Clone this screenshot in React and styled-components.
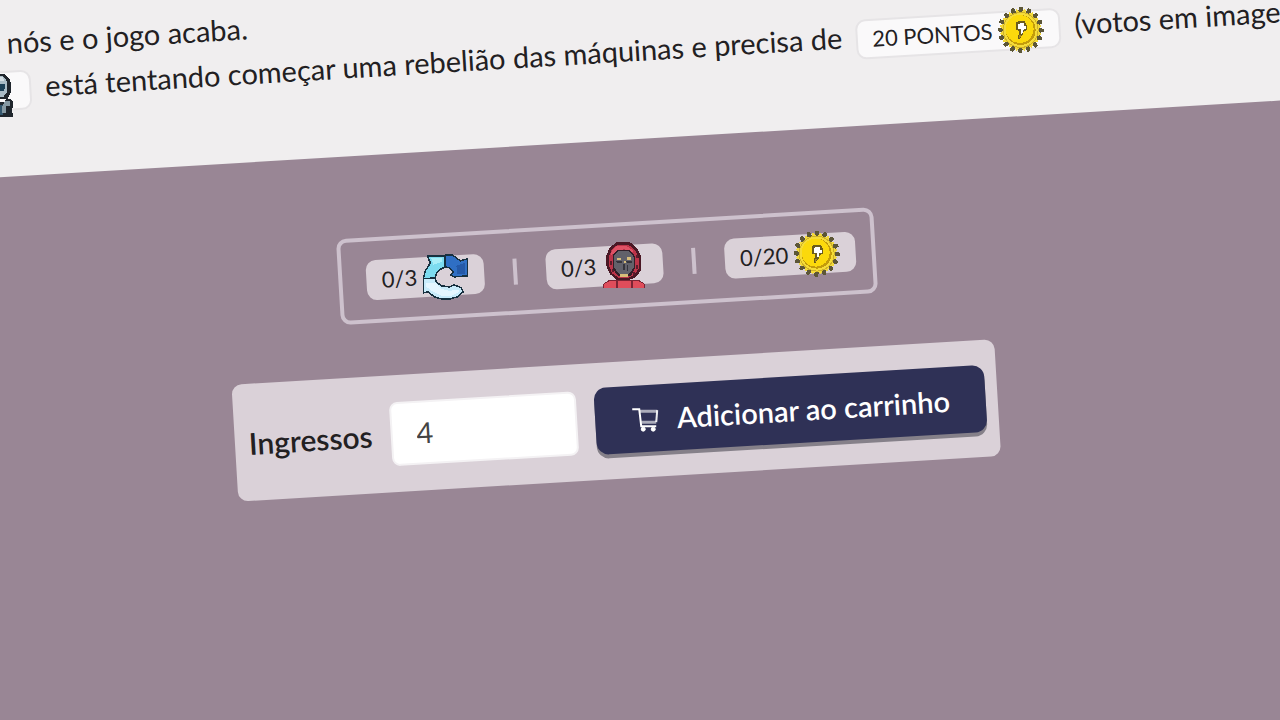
import React from "react";
import styled, { createGlobalStyle } from "styled-components";

const GlobalStyle = createGlobalStyle`
  *, *::before, *::after { box-sizing: border-box; }
  body { margin: 0; background: #998695; }
`;

const Page = styled.main`
  min-height: 100vh;
  overflow: hidden;
  background: #998695;
  color: #222022;
  font-family: Lato, "Open Sans", sans-serif;
  font-size: 29px;
`;

const Tilt = styled.div`
  transform: rotate(-3.43deg);
  transform-origin: 0 0;
`;

const Rules = styled.section`
  margin: 0 -58px;
  padding: 20px 0 66px;
  background: #f0eeef;
`;

const RuleLine = styled.p`
  display: flex;
  align-items: baseline;
  gap: 14px;
  margin: 0;
  padding-left: ${(p) => (p.$indent ? "62px" : "0")};
  line-height: 45px;
  white-space: nowrap;
`;

const Content = styled.section`
  display: flex;
  flex-direction: column;
  align-items: center;
  gap: 53px;
  padding: 82px 100px 0 0;
`;

const Pill = styled.span`
  display: inline-flex;
  flex: none;
  align-items: center;
  height: 40px;
  padding: 0 ${(p) => (p.$light ? "14px" : "15px")};
  border: ${(p) => (p.$light ? "2px solid #e6e4e6" : "none")};
  border-radius: 10px;
  background: ${(p) => (p.$light ? "#faf9fa" : "#dad1d8")};
  font-size: 22px;
  line-height: 36px;

  &::before {
    content: "\\200b";
  }
`;

const Score = styled.div`
  display: flex;
  align-items: center;
  gap: 29px;
  padding: 19px 16px 19px 24px;
  border: 4px solid #cdc1cd;
  border-radius: 10px;
`;

const Divider = styled.span`
  width: 4px;
  height: 26px;
  background: #cdc1cd;
`;

const OrderForm = styled.form`
  display: flex;
  align-items: center;
  gap: 18px;
  padding: 25px 12px 25px 14px;
  border-radius: 10px;
  background: #dad1d8;
`;

const Label = styled.label`
  font-size: 30px;
  font-weight: 600;
`;

const Quantity = styled.input`
  width: 187px;
  height: 64px;
  padding: 0 24px;
  border: 2px solid #f4f2f4;
  border-radius: 8px;
  background: #fff;
  color: #444;
  font: inherit;
`;

const AddButton = styled.button`
  display: flex;
  align-items: center;
  gap: 18px;
  height: 67px;
  padding: 0 36px;
  border: 0;
  border-radius: 12px;
  background: #2f3156;
  box-shadow: 0 4px 0 #858089;
  color: #fff;
  font: inherit;
  font-weight: 600;
  white-space: nowrap;
`;

const Art = styled.svg`
  flex: none;
  width: 48px;
  height: 48px;
  margin-left: 4px;
  overflow: visible;
`;

const CartArt = styled.svg`
  flex: none;
  width: 28px;
  height: 28px;
`;

function Sprite({ children }) {
  return (
    <Art viewBox="0 0 48 48" shapeRendering="crispEdges" aria-hidden="true">
      <g transform="rotate(3.43 24 24)">{children}</g>
    </Art>
  );
}

function CycleIcon() {
  return (
    <Sprite>
      <g stroke="#17303f" strokeWidth="1.5" strokeLinejoin="round">
        <path fill="#c9ecfb" d="M2 27V41L7 40L13 45L20 47H29L36 45L42 40L40 36L33 33L28 35L20 34L15 30L14 26Z" />
        <path fill="#7ddcf0" d="M6 4H23L24 15L18 18L15 22L14 26L2 27L4 19L9 11Z" />
        <path fill="#2f6fc4" d="M24 3H31L39 9L46 7V24L33 25L29 23L32 20L28 16L24 15Z" />
      </g>
      <path fill="#e4f6ff" d="M5 31L14 31L20 37L28 39L37 38L38 40L30 44H20L12 40L5 35Z" />
      <path fill="#a9eef8" d="M10 6H21V10L12 13Z" />
      <path fill="#2459a8" d="M35 14L44 11V22L36 22Z" />
    </Sprite>
  );
}

const teeth = Array.from({ length: 16 }, (_, i) => i * 22.5);

function CoinIcon() {
  return (
    <Sprite>
      {teeth.map((a) => (
        <g key={a} transform={`rotate(${a} 24 24)`}>
          <path fill="#5c5637" d="M21 7L23 1H26L27 7Z" />
          <path fill="#f3d93a" d="M17 9L20 3L25 8Z" />
        </g>
      ))}
      <circle cx="24" cy="24" r="18" fill="#cdb02a" />
      <circle cx="24" cy="24" r="17" fill="#f5dc38" />
      <circle cx="24" cy="24" r="15" fill="#c39c0b" />
      <circle cx="23" cy="23" r="14" fill="#fbd90c" />
      <path fill="#6b5c1e" d="M19 17L22 15H28L30 19V24L27 26L26 29L23 33H21L22 28L23 25L19 24Z" />
      <path fill="#fff" d="M21 19L24 17H27V20H29V23L26 24V27L24 28V23H21Z" />
      <path fill="#a98a1a" d="M23 29H25L23 32H22Z" />
    </Sprite>
  );
}

function HoodIcon() {
  return (
    <Sprite>
      <path fill="#7b2434" d="M3 43L9 39H39L45 43V47H3Z" />
      <path fill="#df4d5b" d="M4 43L10 40H38L44 43V47H4Z" />
      <path fill="#4a1825" d="M17 1H30L37 7L41 15V29L36 36L29 39H17L10 33L6 24V15L10 6Z" />
      <path fill="#bb3449" d="M17 4H29L36 10L39 18V27L34 34L28 37H19L12 32L9 24V15L12 8Z" />
      <path fill="#df5265" d="M16 5H27L34 10L31 12L24 8L16 11L11 14L12 9Z" />
      <path fill="#5a1c2b" d="M10 20H12V24H10ZM12 28H14V31H12ZM36 14H38V17H36ZM36 24H38V28H36ZM33 31H35V34H33Z" />
      <path fill="#321f29" d="M17 9H30L35 15V27L31 35H18L13 28V14Z" />
      <path fill="#62616a" d="M18 10H29L34 16V26L29 33H19L14 26V15Z" />
      <path fill="#35343c" d="M16 20H22V22H17ZM26 20H32V22H27ZM23 23H25V29H23ZM27 24H28V30H27Z" />
      <path fill="#d8bd7a" d="M17 17H21V19H17ZM27 16H31V19H27ZM24 20H26V22H24ZM20 33H28V36H20Z" />
      <path fill="#7b2434" d="M16 39H18V47H16ZM31 39H33V47H31Z" />
    </Sprite>
  );
}

function RobotIcon() {
  return (
    <Sprite>
      <g transform="translate(-3 4)">
        <path fill="#20262d" d="M10 2H40L45 7L47 13V20L43 27H7L3 20V9Z" />
        <path fill="#a9bbc6" d="M11 4H38L42 9L43 20L39 25H11L7 20V10Z" />
        <path fill="#d3dee3" d="M32 5H38L40 9H33Z" />
        <path fill="#1c4057" d="M34 12H40L41 15L39 19H34ZM11 12H18V19H11Z" />
        <path fill="#20262d" d="M8 30H40L42 27H46L49 31V35L47 37L49 45H2V34Z" />
        <path fill="#33566d" d="M10 33H39V43H10Z" />
        <path fill="#8699a3" d="M41 29H46V34H42V41H38V34Z" />
      </g>
    </Sprite>
  );
}

function CartIcon() {
  return (
    <CartArt viewBox="0 0 28 28" aria-hidden="true">
      <g transform="rotate(3.43 14 14)" fill="none" stroke="#fff">
        <path strokeWidth="2" d="M1 4H8L10 21H25" />
        <path strokeWidth="3" opacity=".6" d="M8 6H26" />
        <path strokeWidth="2" opacity=".9" d="M26 5L25 17" />
        <path strokeWidth="3" opacity=".6" d="M10 17H25" />
        <circle cx="12" cy="24" r="2" fill="#fff" />
        <circle cx="22" cy="24" r="2" fill="#fff" />
      </g>
    </CartArt>
  );
}

export default function App() {
  return (
    <>
      <GlobalStyle />
      <Page>
        <Tilt>
          <Rules>
            <RuleLine $indent>nós e o jogo acaba.</RuleLine>
            <RuleLine>
              <Pill $light>
                <RobotIcon />
              </Pill>
              <span>está tentando começar uma rebelião das máquinas e precisa de</span>
              <Pill $light>
                20 PONTOS
                <CoinIcon />
              </Pill>
              <span>(votos em image</span>
            </RuleLine>
          </Rules>
          <Content>
            <Score>
              <Pill>
                0/3
                <CycleIcon />
              </Pill>
              <Divider />
              <Pill>
                0/3
                <HoodIcon />
              </Pill>
              <Divider />
              <Pill>
                0/20
                <CoinIcon />
              </Pill>
            </Score>
            <OrderForm onSubmit={(e) => e.preventDefault()}>
              <Label htmlFor="tickets">Ingressos</Label>
              <Quantity id="tickets" type="text" inputMode="numeric" defaultValue="4" />
              <AddButton type="submit">
                <CartIcon />
                Adicionar ao carrinho
              </AddButton>
            </OrderForm>
          </Content>
        </Tilt>
      </Page>
    </>
  );
}
